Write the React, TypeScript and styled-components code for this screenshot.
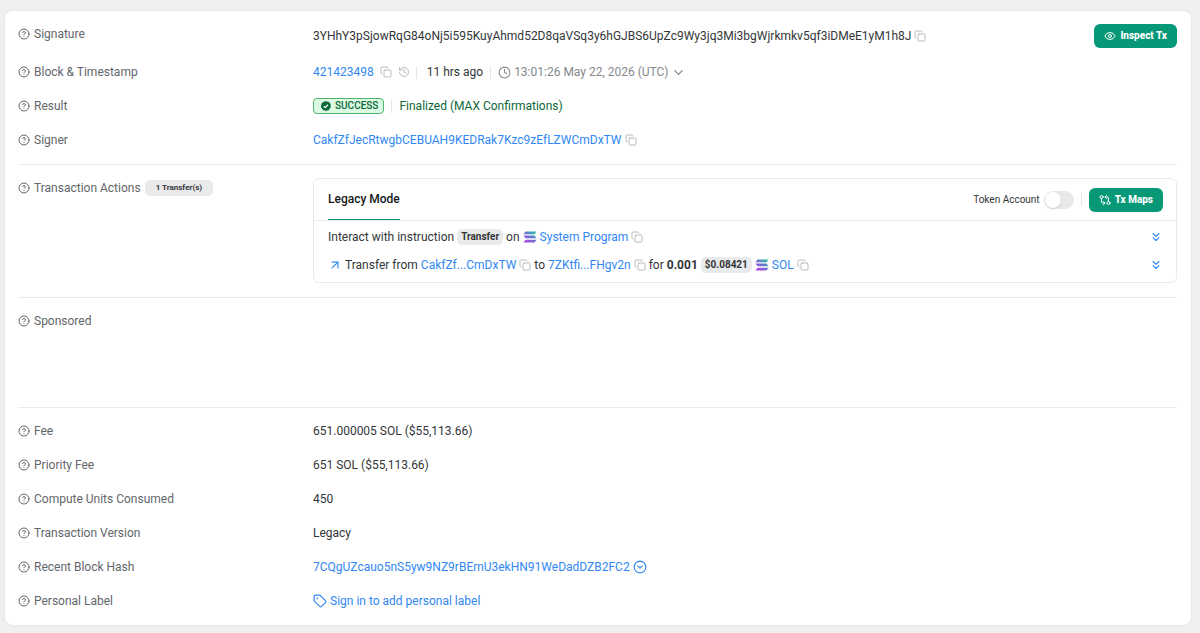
import React from "react";
import styled, { createGlobalStyle } from "styled-components";
import {
  ArrowUpRight,
  ChevronDown,
  ChevronsDown,
  CircleChevronDown,
  CircleHelp,
  Clock,
  Copy,
  Eye,
  GitCompareArrows,
  History,
  Tag,
} from "lucide-react";

const GlobalStyle = createGlobalStyle`
  *, *::before, *::after { box-sizing: border-box; }
  body {
    margin: 0;
    background: #eff0f2;
    color: #333639;
    font-family: Roboto, "Liberation Sans", sans-serif;
    font-size: 12px;
    line-height: 20px;
  }
  button { font: inherit; cursor: pointer; }
  svg { flex: none; display: block; }
`;

const Page = styled.main`
  padding: 11px 9px 8px 5px;
`;

const Card = styled.div`
  background: #fff;
  border-radius: 8px;
  padding: 0 14px 0 13px;
  box-shadow: 0 0 4px rgba(0, 0, 0, 0.06);
`;

const Section = styled.section<{ $minHeight?: number }>`
  padding: 6px 0 7px;
  min-height: ${(p) => p.$minHeight ?? 0}px;
  & + & { border-top: 1px solid #e9eaeb; }
`;

const Row = styled.div`
  display: grid;
  grid-template-columns: 295px minmax(0, 1fr);
  align-items: start;
  padding: 7px 0;
`;

const Label = styled.div`
  display: flex;
  align-items: center;
  gap: 4px;
  color: #62666a;
`;

const Group = styled.div<{ $gap?: number }>`
  display: flex;
  align-items: center;
  gap: ${(p) => p.$gap ?? 3}px;
  min-width: 0;
`;

const Spread = styled(Group)`
  justify-content: space-between;
`;

const Link = styled.a`
  display: inline-flex;
  align-items: center;
  gap: 3px;
  color: #3187f3;
  text-decoration: none;
`;

const ArrowMark = styled.span`
  color: #3187f3;
`;

const IconButton = styled.button<{ $color?: string }>`
  display: inline-flex;
  padding: 0;
  border: 0;
  background: none;
  color: ${(p) => p.$color ?? "#b9bcc0"};
`;

const PrimaryButton = styled.button`
  display: inline-flex;
  align-items: center;
  gap: 4px;
  height: 24px;
  padding: 0 10px;
  border: 0;
  border-radius: 6px;
  background: #069877;
  color: #fff;
  font-size: 10px;
  font-weight: 800;
`;

const Separator = styled.span`
  width: 1px;
  height: 13px;
  background: #e4e6e8;
`;

const Muted = styled(Group)`
  color: #84888c;
`;

const Confirmed = styled.span`
  color: #0d6838;
`;

const SuccessBadge = styled.span`
  display: inline-flex;
  align-items: center;
  gap: 4px;
  height: 16px;
  padding: 0 5px 0 7px;
  border: 1px solid #4fb56c;
  border-radius: 4px;
  background: #dcfae4;
  color: #0d6838;
  font-size: 10px;
  font-weight: 500;
  line-height: 16px;
`;

const Badge = styled.span<{ $small?: boolean }>`
  padding: 0 ${(p) => (p.$small ? 11 : 4)}px;
  border-radius: 5px;
  background: #e9eaeb;
  color: #333639;
  font-size: ${(p) => (p.$small ? 8 : 10)}px;
  font-weight: 700;
  line-height: 16px;
`;

const Panel = styled.div`
  border: 1px solid #e9eaeb;
  border-radius: 6px;
`;

const PanelHeader = styled.div`
  display: flex;
  justify-content: space-between;
  align-items: stretch;
  height: 42px;
  padding: 0 13px 0 14px;
  border-bottom: 1px solid #e9eaeb;
`;

const Tab = styled.button`
  padding: 0 0 2px;
  border: 0;
  background: none;
  box-shadow: inset 0 -1px 0 #069877;
  color: #15181b;
  font-weight: 500;
`;

const PanelBody = styled.div`
  padding: 2px 13px 3px 14px;
`;

const ActionRow = styled.div`
  display: flex;
  align-items: center;
  justify-content: space-between;
  height: 28px;
`;

const SwitchLabel = styled.label`
  display: flex;
  align-items: center;
  gap: 4px;
  font-size: 10px;
`;

const Switch = styled.input`
  appearance: none;
  width: 30px;
  height: 18px;
  margin: 0;
  padding: 1px;
  border-radius: 9px;
  background: #e8e8e9;
  cursor: pointer;
  &::before {
    content: "";
    display: block;
    width: 16px;
    height: 16px;
    border-radius: 50%;
    background: #fff;
    box-shadow: 0 1px 2px rgba(0, 0, 0, 0.12);
  }
  &:checked { background: #069877; }
  &:checked::before { margin-left: 12px; }
`;

function Field({ name, extra, children }: { name: string; extra?: React.ReactNode; children?: React.ReactNode }) {
  return (
    <Row>
      <Label>
        <CircleHelp size={12} strokeWidth={2} />
        <span>{name}</span>
        {extra}
      </Label>
      {children}
    </Row>
  );
}

function CopyButton() {
  return (
    <IconButton aria-label="Copy">
      <Copy size={12} strokeWidth={2} />
    </IconButton>
  );
}

function CheckSeal() {
  return (
    <svg width="10" height="10" viewBox="0 0 20 20" aria-hidden="true">
      <path
        fill="#0d6838"
        d="M10 0l2.600 1.300 3 .4 1.600 2.500 2.200 2-.2 3 .4 1.600-.8 2.800-1.800 2.400-2 2.300-2.900.6L10 20l-2.600-1.200-2.900-.6-1.800-2.300L.8 13.600 0 10.800l.4-3L1.400 5 3.400 2.500 6.400 1.300z"
      />
      <path d="M5.500 10.200l3 3 5.500-5.700" fill="none" stroke="#fff" strokeWidth="2.400" />
    </svg>
  );
}

function SolanaMark() {
  return (
    <svg width="14" height="12" viewBox="0 0 14 12" aria-hidden="true">
      <defs>
        <linearGradient id="sol" x1="12" y1="0" x2="3" y2="12" gradientUnits="userSpaceOnUse">
          <stop offset="0" stopColor="#22c9a4" />
          <stop offset="0.5" stopColor="#6a72cf" />
          <stop offset="1" stopColor="#b445e6" />
        </linearGradient>
      </defs>
      <path fill="url(#sol)" d="M2.500 .5H13.500L11.500 3.200H.5zM.5 4.600H11.500L13.500 7.300H2.500zM2.500 8.700H13.500L11.500 11.400H.5z" />
    </svg>
  );
}

export default function App() {
  return (
    <>
      <GlobalStyle />
      <Page>
        <Card>
          <Section>
            <Field name="Signature">
              <Spread>
                <Group>
                  <span>3YHhY3pSjowRqG84oNj5i595KuyAhmd52D8qaVSq3y6hGJBS6UpZc9Wy3jq3Mi3bgWjrkmkv5qf3iDMeE1yM1h8J</span>
                  <CopyButton />
                </Group>
                <PrimaryButton>
                  <Eye size={12} />
                  Inspect Tx
                </PrimaryButton>
              </Spread>
            </Field>
            <Field name="Block & Timestamp">
              <Group $gap={10}>
                <Group $gap={6}>
                  <Link href="#block">421423498</Link>
                  <CopyButton />
                  <IconButton aria-label="Block history">
                    <History size={12} />
                  </IconButton>
                  <Separator />
                </Group>
                <Group $gap={7}>
                  <span>11 hrs ago</span>
                  <Separator />
                  <Muted>
                    <Clock size={13} />
                    <span>13:01:26 May 22, 2026 (UTC)</span>
                    <ChevronDown size={15} />
                  </Muted>
                </Group>
              </Group>
            </Field>
            <Field name="Result">
              <Group $gap={7}>
                <SuccessBadge>
                  <CheckSeal />
                  SUCCESS
                </SuccessBadge>
                <Separator />
                <Confirmed>Finalized (MAX Confirmations)</Confirmed>
              </Group>
            </Field>
            <Field name="Signer">
              <Group>
                <Link href="#signer">CakfZfJecRtwgbCEBUAH9KEDRak7Kzc9zEfLZWCmDxTW</Link>
                <CopyButton />
              </Group>
            </Field>
          </Section>

          <Section>
            <Field name="Transaction Actions" extra={<Badge $small>1 Transfer(s)</Badge>}>
              <Panel>
                <PanelHeader>
                  <Tab>Legacy Mode</Tab>
                  <Group $gap={7}>
                    <SwitchLabel>
                      Token Account
                      <Switch type="checkbox" role="switch" />
                    </SwitchLabel>
                    <Separator />
                    <PrimaryButton>
                      <GitCompareArrows size={12} />
                      Tx Maps
                    </PrimaryButton>
                  </Group>
                </PanelHeader>
                <PanelBody>
                  <ActionRow>
                    <Group>
                      <span>Interact with instruction</span>
                      <Badge>Transfer</Badge>
                      <span>on</span>
                      <Link href="#system-program">
                        <SolanaMark />
                        System Program
                      </Link>
                      <CopyButton />
                    </Group>
                    <IconButton aria-label="Expand instruction" $color="#3187f3">
                      <ChevronsDown size={14} />
                    </IconButton>
                  </ActionRow>
                  <ActionRow>
                    <Group>
                      <ArrowMark>
                        <ArrowUpRight size={14} />
                      </ArrowMark>
                      <span>Transfer from</span>
                      <Link href="#from">CakfZf...CmDxTW</Link>
                      <CopyButton />
                      <span>to</span>
                      <Link href="#to">7ZKtfi...FHgv2n</Link>
                      <CopyButton />
                      <span>for</span>
                      <strong>0.001</strong>
                      <Badge>$0.08421</Badge>
                      <Link href="#sol-token">
                        <SolanaMark />
                        SOL
                      </Link>
                      <CopyButton />
                    </Group>
                    <IconButton aria-label="Expand transfer" $color="#3187f3">
                      <ChevronsDown size={14} />
                    </IconButton>
                  </ActionRow>
                </PanelBody>
              </Panel>
            </Field>
          </Section>

          <Section $minHeight={110}>
            <Field name="Sponsored" />
          </Section>

          <Section>
            <Field name="Fee">
              <Group>651.000005 SOL ($55,113.66)</Group>
            </Field>
            <Field name="Priority Fee">
              <Group>651 SOL ($55,113.66)</Group>
            </Field>
            <Field name="Compute Units Consumed">
              <Group>450</Group>
            </Field>
            <Field name="Transaction Version">
              <Group>Legacy</Group>
            </Field>
            <Field name="Recent Block Hash">
              <Group>
                <Link href="#block-hash">7CQgUZcauo5nS5yw9NZ9rBEmU3ekHN91WeDadDZB2FC2</Link>
                <IconButton aria-label="Show block hash details" $color="#3187f3">
                  <CircleChevronDown size={14} />
                </IconButton>
              </Group>
            </Field>
            <Field name="Personal Label">
              <Group>
                <Link href="#sign-in">
                  <Tag size={14} />
                  Sign in to add personal label
                </Link>
              </Group>
            </Field>
          </Section>
        </Card>
      </Page>
    </>
  );
}
